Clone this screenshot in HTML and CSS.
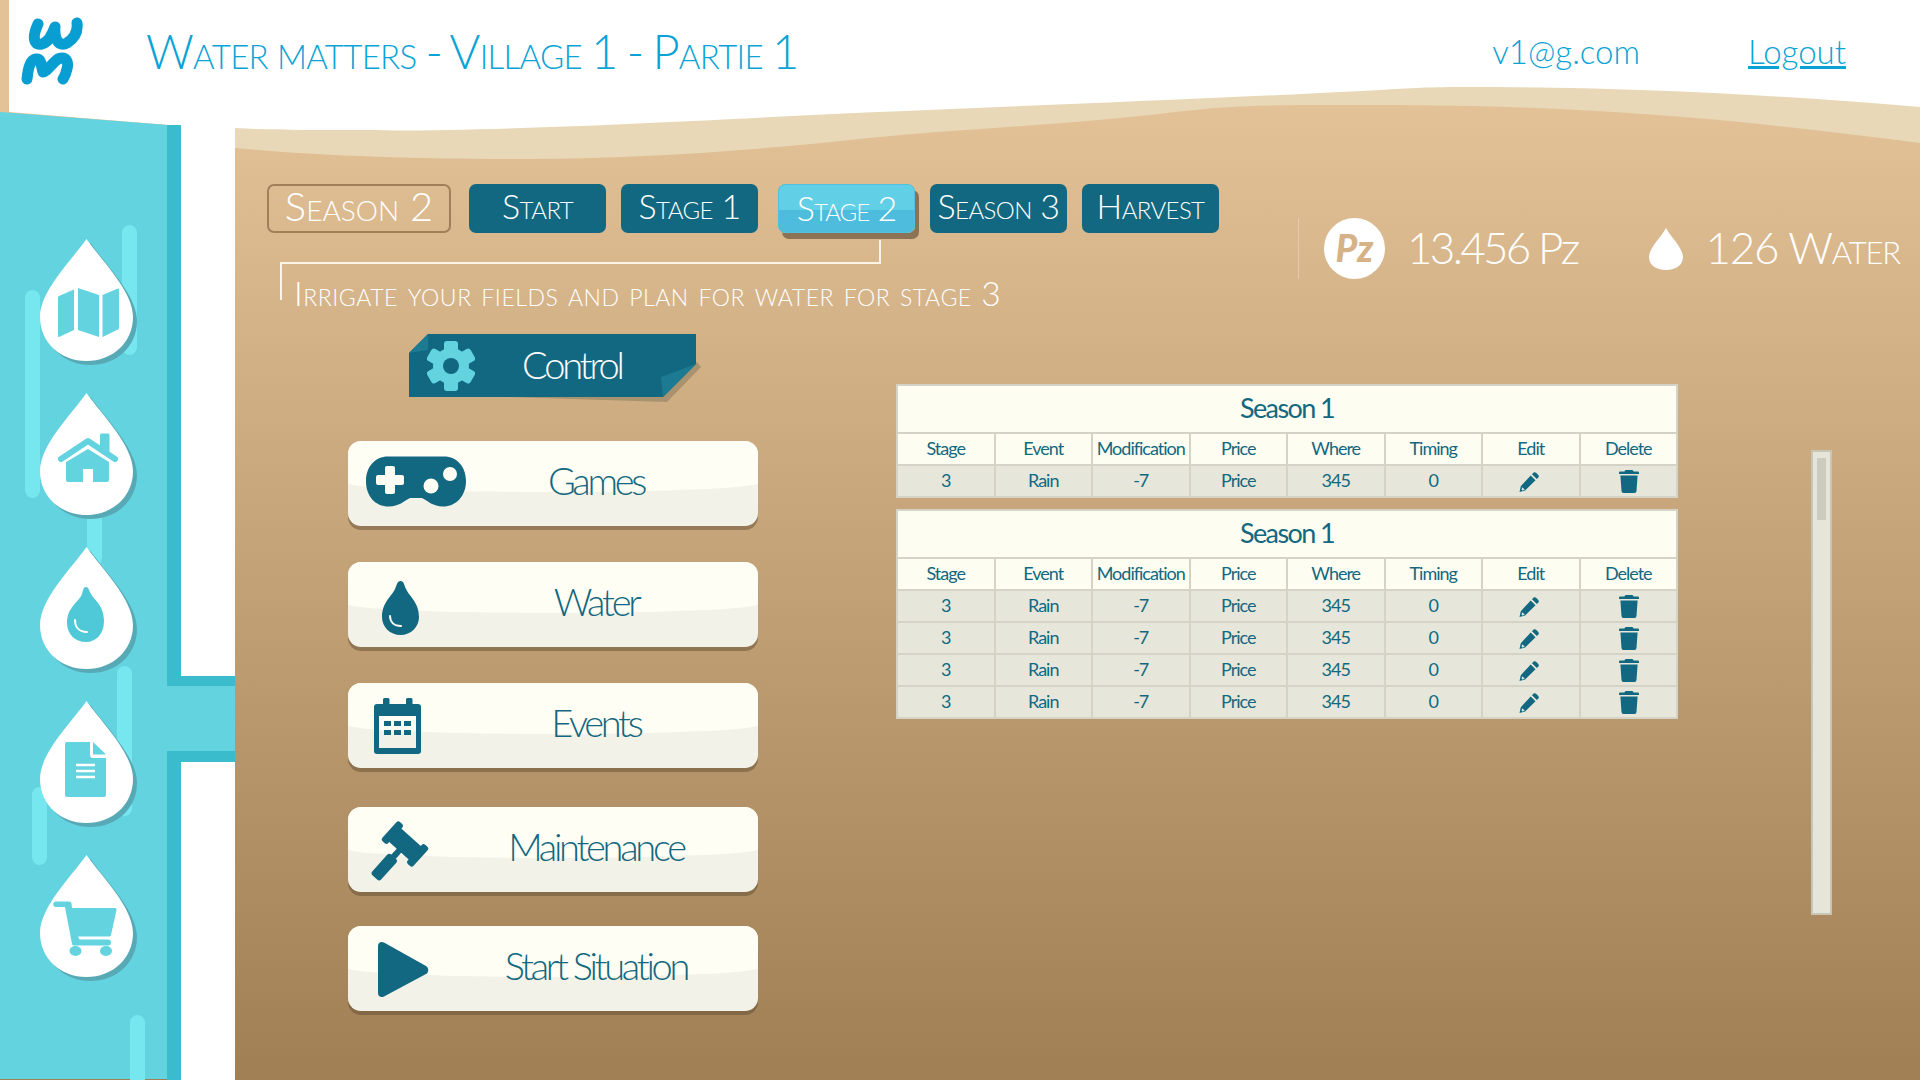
FILE: index.html
```html
<!DOCTYPE html>
<html lang="en">
<head>
    <meta charset="UTF-8">
    <title>Water Matters</title>
    <link rel="stylesheet" href="styles.css">
</head>
<body>
    <svg width="0" height="0" class="defs">
        <symbol id="ico-pencil" viewBox="0 0 20 20">
            <path d="M14.6 0.6a2 2 0 0 1 2.5 0.1l2.2 2.2a2 2 0 0 1 0.1 2.5l-1.6 1.6-4.8-4.8zM11.7 3.5l4.8 4.8-10.4 10.3-5.6 1.4 1.3-5.8zM3.3 15.2l-0.7 2.4 0.8 0.8 2.4-0.7z"/>
        </symbol>
        <symbol id="ico-trash" viewBox="0 0 20 23">
            <path d="M7 0h6a1.5 1.5 0 0 1 1.5 1.5h4.2a1.2 1.2 0 0 1 1.3 1.2v1.3h-20v-1.3a1.2 1.2 0 0 1 1.3-1.2h4.2a1.5 1.5 0 0 1 1.5-1.5zM1.4 5.5h17.2l-1.1 15.6a2 2 0 0 1-2 1.9h-11a2 2 0 0 1-2-1.9z"/>
        </symbol>
        <symbol id="ico-drop" viewBox="0 0 97 126">
            <path class="drop-shadow" transform="translate(4 4)" d="M46.5 0C62 22 93 52 93 78C93 104 72 122 46.5 122C21 122 0 104 0 78C0 52 31 22 46.5 0Z"/>
            <path class="drop-body" d="M46.5 0C62 22 93 52 93 78C93 104 72 122 46.5 122C21 122 0 104 0 78C0 52 31 22 46.5 0Z"/>
        </symbol>
    </svg>

    <div class="page">
        <!-- landscape behind everything: sand, header wave, water pipe -->
        <svg class="backdrop" viewBox="0 0 1920 1080" width="1920" height="1080">
            <path fill="#e8d8b7" d="M235 80H1920V143C1760 122 1600 105 1380 105C1290 105 1240 104 1175 112C1070 125 970 128 869 138C760 150 640 159 524 159C420 159 320 156 235 148Z"/>
            <path fill="#fff" d="M9 0H1920V107C1760 93 1600 87 1470 87C1430 87 1410 88 1380 90C1150 102 950 108 792 116C600 126 450 132 356 130C310 130 270 130 235 128L181 126L9 112Z"/>
            <rect x="181" y="126" width="54" height="954" fill="#fff"/>
            <path fill="#62d3df" d="M0 112L181 126V1079H0Z"/>
            <rect x="167" y="125" width="14" height="955" fill="#3bbccc"/>
            <rect x="167" y="676" width="68" height="86" fill="#3bbccc"/>
            <rect x="167" y="686" width="68" height="65" fill="#62d3df"/>
        </svg>

        <header class="topbar">
            <svg class="logo" viewBox="20 17 64 70" width="64" height="70">
                <path d="M38 25C31 40 35 47 42 45C49 43 52 36 55 28C54 42 60 48 67 44C75 39 78 32 77 24"/>
                <path d="M27 80C28 70 30 61 36 60C42 59 41 68 43 73C47 73 52 64 58 60C66 57 69 62 67 70C66 74 65 77 63 80"/>
            </svg>
            <h1 class="title">Water matters - Village 1 - Partie 1</h1>
            <span class="user-mail">v1@g.com</span>
            <a class="logout" href="#">Logout</a>
        </header>

        <div class="workspace">
            <aside class="sidebar">
                <i class="streak streak-a"></i>
                <i class="streak streak-b"></i>
                <i class="streak streak-c"></i>
                <i class="streak streak-d"></i>
                <i class="streak streak-e"></i>
                <i class="streak streak-f"></i>

                <a class="drop" href="#">
                    <svg viewBox="0 0 97 126" width="97" height="126">
                        <use href="#ico-drop"/>
                        <path class="drop-ico" d="M19 57L34 50.500V91L19 98a1 1 0 0 1-1-1V58.500a2 2 0 0 1 1-1.500zM38 49L59 56V98L38 91zM62.500 56L78 49.500a1 1 0 0 1 1 1V89a2 2 0 0 1-1 1.500L62.500 98z"/>
                    </svg>
                </a>
                <a class="drop" href="#">
                    <svg viewBox="0 0 97 126" width="97" height="126">
                        <use href="#ico-drop"/>
                        <path class="drop-line" d="M21 66L48 48L75 66"/>
                        <path class="drop-ico" d="M60 42a1.500 1.500 0 0 1 1.500-1.500H68a1.500 1.500 0 0 1 1.500 1.500V59L60 53zM48 56L69 69V87a2 2 0 0 1-2 2H53V76H43V89H28a2 2 0 0 1-2-2V69z"/>
                    </svg>
                </a>
                <a class="drop" href="#">
                    <svg viewBox="0 0 97 126" width="97" height="126">
                        <use href="#ico-drop"/>
                        <path class="drop-ico-dark" d="M46 40C49 40 49 44 51 47C54 53 64 58 64 74C64 87 56 95 46 95C35 95 27 87 27 76C27 60 39 55 42 47C43 44 43 40 46 40Z"/>
                        <path class="drop-gleam" d="M35 73C35 80 39 85 47 85"/>
                    </svg>
                </a>
                <a class="drop" href="#">
                    <svg viewBox="0 0 97 126" width="97" height="126">
                        <use href="#ico-drop"/>
                        <path class="drop-ico" d="M26.500 41H50V54a3 3 0 0 0 3 3H66V94a2 2 0 0 1-2 2H27a2 2 0 0 1-2-2V43a2 2 0 0 1 1.500-2zM53 41L66 53.500H53z"/>
                        <path class="drop-rule" d="M36 64H55M36 70H55M36 76H55"/>
                    </svg>
                </a>
                <a class="drop" href="#">
                    <svg viewBox="0 0 97 126" width="97" height="126">
                        <use href="#ico-drop"/>
                        <path class="drop-ico" d="M16 46.500H29a2.500 2.500 0 0 1 2.500 2L32 53H75a1.500 1.500 0 0 1 1.500 2L71 80a2 2 0 0 1-2 1.500H38L39.500 84.500H68a2.500 2.500 0 0 1 0 6H34a2 2 0 0 1-2-1.500L25 52H16a2.700 2.700 0 0 1 0-5.500z"/>
                        <ellipse class="drop-ico" cx="35.500" cy="96" rx="6" ry="5"/>
                        <ellipse class="drop-ico" cx="66" cy="96" rx="6" ry="5"/>
                    </svg>
                </a>
            </aside>

            <main class="stage">
                <div class="stage-top">
                    <nav class="tabs">
                        <span class="tab tab-season">Season 2</span>
                        <a class="tab" href="#">Start</a>
                        <a class="tab" href="#">Stage 1</a>
                        <a class="tab tab-active" href="#">Stage 2</a>
                        <a class="tab" href="#">Season 3</a>
                        <a class="tab" href="#">Harvest</a>
                    </nav>
                    <div class="stats">
                        <span class="coin">Pz</span>
                        <span class="stat">13.456 Pz</span>
                        <svg class="stat-drop" viewBox="0 0 34 42" width="34" height="42">
                            <path d="M17 0C21 8 34 20 34 29C34 37 27 42 17 42C7 42 0 37 0 29C0 20 13 8 17 0Z"/>
                        </svg>
                        <span class="stat stat-water">126 Water</span>
                    </div>
                </div>

                <p class="hint">Irrigate your fields and plan for water for stage 3</p>

                <div class="board">
                    <div class="menu">
                        <div class="ribbon">
                            <svg class="ribbon-bg" viewBox="0 0 300 72" width="300" height="72">
                                <path fill="#a8926f" d="M4 60L258 68L292 33L288 28L250 60Z"/>
                                <path fill="#126880" d="M0 19L19 0H287V30L254 63L0 63Z"/>
                                <path fill="#1c7a92" d="M0 19L19 0V16Z"/>
                                <path fill="#1c7a92" d="M252 43L287 30L254 63Z"/>
                            </svg>
                            <svg class="ribbon-gear" viewBox="0 0 48 50" width="48" height="50">
                                <g transform="translate(24 25)">
                                    <rect x="-7" y="-25" width="14" height="50" rx="3"/>
                                    <rect x="-7" y="-25" width="14" height="50" rx="3" transform="rotate(60)"/>
                                    <rect x="-7" y="-25" width="14" height="50" rx="3" transform="rotate(120)"/>
                                    <circle r="18"/>
                                    <circle class="gear-hole" r="8"/>
                                </g>
                            </svg>
                            <span class="ribbon-label">Control</span>
                        </div>

                        <a class="menu-item" href="#">
                            <svg viewBox="0 0 110 65" width="110" height="65">
                                <path d="M30 5.500H86C99 5.500 108 16 108 30C108 45 98 55.500 85 55.500C75 55.500 70 50 64 47H52C46 50 41 55.500 31 55.500C17 55.500 8 45 8 30C8 16 17 5.500 30 5.500Z"/>
                                <path class="pad-hole" d="M27 17a2 2 0 0 1 2-2H35a2 2 0 0 1 2 2V24H44a2 2 0 0 1 2 2V32a2 2 0 0 1-2 2H37V41a2 2 0 0 1-2 2H29a2 2 0 0 1-2-2V34H20a2 2 0 0 1-2-2V26a2 2 0 0 1 2-2H27z"/>
                                <circle class="pad-hole" cx="92" cy="23" r="7"/>
                                <circle class="pad-hole" cx="73" cy="35" r="7.500"/>
                            </svg>
                            <span class="menu-label">Games</span>
                        </a>
                        <a class="menu-item" href="#">
                            <svg viewBox="0 0 110 65" width="110" height="65">
                                <path d="M42.500 9C46 9 46 13 48 17C51 24 61 30 61 45C61 55 53 63 42.500 63C32 63 24 55 24 45C24 30 34 24 37 17C39 13 39 9 42.500 9Z"/>
                                <path class="gleam" d="M32 44C32 50 36 54 43 54"/>
                            </svg>
                            <span class="menu-label">Water</span>
                        </a>
                        <a class="menu-item" href="#">
                            <svg viewBox="0 0 110 65" width="110" height="65">
                                <path d="M25 6.500a1.500 1.500 0 0 1 1.500-1.500H30a1.500 1.500 0 0 1 1.500 1.500V11H48V6.500a1.500 1.500 0 0 1 1.500-1.500H53a1.500 1.500 0 0 1 1.500 1.500V11H60a3 3 0 0 1 3 3V58a3 3 0 0 1-3 3H19a3 3 0 0 1-3-3V14a3 3 0 0 1 3-3H25zM21 23V55H58V23z"/>
                                <path d="M26 28h7v5h-7zM36 28h7v5h-7zM46 28h7v5h-7zM26 37h7v5h-7zM36 37h7v5h-7zM46 37h7v5h-7z"/>
                            </svg>
                            <span class="menu-label">Events</span>
                        </a>
                        <a class="menu-item" href="#">
                            <svg viewBox="0 0 110 65" width="110" height="65">
                                <g transform="translate(47 27) rotate(42)">
                                    <rect x="-15" y="-9" width="30" height="18"/>
                                    <rect x="-21" y="-13" width="8" height="26" rx="2.500"/>
                                    <rect x="13" y="-13" width="8" height="26" rx="2.500"/>
                                    <rect x="-3" y="8" width="6" height="10"/>
                                    <rect x="-6" y="17" width="12" height="28" rx="3"/>
                                </g>
                            </svg>
                            <span class="menu-label">Maintenance</span>
                        </a>
                        <a class="menu-item" href="#">
                            <svg viewBox="0 0 110 65" width="110" height="65">
                                <path d="M20 10C20 6.500 23 5 26 6.500L68 30C71 32 71 36 68 38L26 60.500C23 62 20 60.500 20 57Z"/>
                            </svg>
                            <span class="menu-label">Start Situation</span>
                        </a>
                    </div>

                    <div class="tables">
                        <table class="season">
                            <tr><th colspan="8" class="season-title">Season 1</th></tr>
                            <tr><th>Stage</th><th>Event</th><th>Modification</th><th>Price</th><th>Where</th><th>Timing</th><th>Edit</th><th>Delete</th></tr>
                            <tr><td>3</td><td>Rain</td><td>-7</td><td>Price</td><td>345</td><td>0</td>
                                <td><svg class="ico-edit"><use href="#ico-pencil"/></svg></td>
                                <td><svg class="ico-del"><use href="#ico-trash"/></svg></td></tr>
                        </table>
                        <table class="season">
                            <tr><th colspan="8" class="season-title">Season 1</th></tr>
                            <tr><th>Stage</th><th>Event</th><th>Modification</th><th>Price</th><th>Where</th><th>Timing</th><th>Edit</th><th>Delete</th></tr>
                            <tr><td>3</td><td>Rain</td><td>-7</td><td>Price</td><td>345</td><td>0</td>
                                <td><svg class="ico-edit"><use href="#ico-pencil"/></svg></td>
                                <td><svg class="ico-del"><use href="#ico-trash"/></svg></td></tr>
                            <tr><td>3</td><td>Rain</td><td>-7</td><td>Price</td><td>345</td><td>0</td>
                                <td><svg class="ico-edit"><use href="#ico-pencil"/></svg></td>
                                <td><svg class="ico-del"><use href="#ico-trash"/></svg></td></tr>
                            <tr><td>3</td><td>Rain</td><td>-7</td><td>Price</td><td>345</td><td>0</td>
                                <td><svg class="ico-edit"><use href="#ico-pencil"/></svg></td>
                                <td><svg class="ico-del"><use href="#ico-trash"/></svg></td></tr>
                            <tr><td>3</td><td>Rain</td><td>-7</td><td>Price</td><td>345</td><td>0</td>
                                <td><svg class="ico-edit"><use href="#ico-pencil"/></svg></td>
                                <td><svg class="ico-del"><use href="#ico-trash"/></svg></td></tr>
                        </table>
                    </div>

                    <div class="scrollbar"><div class="scrollbar-thumb"></div></div>
                </div>
            </main>
        </div>
    </div>
</body>
</html>
```

FILE: styles.css
```css
body {
    margin: 0;
    font-family: "Lato", "Liberation Sans", sans-serif;
}

.defs {
    position: absolute;
}

.page {
    position: relative;
    width: 1920px;
    height: 1080px;
    overflow: hidden;
    background: linear-gradient(180deg, #e3c297 100px, #a07f55 100%);
}

.backdrop {
    position: absolute;
    top: 0;
    left: 0;
}

/* Header */
.topbar {
    position: relative;
    display: flex;
    align-items: center;
    box-sizing: border-box;
    height: 106px;
    padding: 0 0 4px 20px;
    color: #0ba3d6;
}

.logo {
    flex: none;
    margin-right: 62px;
}

.logo path {
    fill: none;
    stroke: #089ed2;
    stroke-width: 11;
    stroke-linecap: round;
    stroke-linejoin: round;
}

.title {
    margin: 0;
    font-size: 47px;
    font-weight: 300;
    font-variant: small-caps;
    letter-spacing: -0.7px;
    word-spacing: -3px;
    white-space: nowrap;
}

.user-mail {
    margin-left: auto;
    font-size: 33px;
    font-weight: 300;
}

.logout {
    margin: 0 74px 0 108px;
    font-size: 33px;
    font-weight: 300;
    color: #0ba3d6;
}

/* Layout under the header */
.workspace {
    position: relative;
    display: flex;
    height: 974px;
}

.sidebar {
    position: relative;
    flex: none;
    display: flex;
    flex-direction: column;
    gap: 28px;
    width: 235px;
    padding: 133px 0 0 40px;
    box-sizing: border-box;
}

.streak {
    position: absolute;
    width: 15px;
    background: #76e6ef;
    border-radius: 8px;
}

.streak-a { left: 122px; top: 119px; height: 130px; }
.streak-b { left: 25px; top: 184px; height: 208px; }
.streak-c { left: 87px; top: 400px; height: 60px; }
.streak-d { left: 117px; top: 560px; height: 150px; }
.streak-e { left: 32px; top: 681px; height: 78px; }
.streak-f { left: 130px; top: 909px; height: 80px; }

.drop {
    position: relative;
    display: block;
    width: 97px;
    height: 126px;
}

.drop svg {
    display: block;
}

.drop-shadow { fill: #57aab5; }
.drop-body { fill: #fff; }
.drop-ico { fill: #62d3df; }
.drop-ico-dark { fill: #4fc8d8; }

.drop-line {
    fill: none;
    stroke: #62d3df;
    stroke-width: 6;
    stroke-linecap: round;
    stroke-linejoin: round;
}

.drop-gleam {
    fill: none;
    stroke: #fff;
    stroke-width: 2;
    stroke-linecap: round;
}

.drop-rule {
    fill: none;
    stroke: #fff;
    stroke-width: 2.500;
}

.stage {
    flex: 1;
    min-width: 0;
    padding-top: 78px;
}

.stage-top {
    display: flex;
    align-items: flex-start;
    height: 78px;
    padding-left: 32px;
}

/* Stage tabs */
.tabs {
    display: flex;
    gap: 15px;
}

.tab {
    display: flex;
    align-items: center;
    justify-content: center;
    box-sizing: border-box;
    width: 137px;
    height: 49px;
    padding-bottom: 6px;
    border-radius: 7px;
    background: #126880;
    color: #fff;
    font-size: 34px;
    font-weight: 300;
    font-variant: small-caps;
    letter-spacing: -0.6px;
    text-decoration: none;
    white-space: nowrap;
}

.tab-season {
    width: 184px;
    margin-right: 3px;
    background: none;
    border: 2px solid #a08059;
    font-size: 40px;
    letter-spacing: 0;
}

.tab-active {
    margin-left: 5px;
    padding-bottom: 2px;
    background: linear-gradient(180deg, #61d0e6 54%, #4dbcdd 54%);
    box-shadow: 4px 6px 0 #8c7356;
    border: 1px solid #4fc1de;
    letter-spacing: -1px;
}

/* Money and water counters */
.stats {
    display: flex;
    align-items: center;
    flex: none;
    height: 61px;
    margin: 34px 0 0 79px;
    padding-left: 25px;
    border-left: 1px solid #e6cba8;
    color: #fff;
}

.coin {
    flex: none;
    width: 61px;
    height: 61px;
    margin-right: 22px;
    border-radius: 50%;
    background: #fff;
    color: #d5b288;
    font-size: 37px;
    font-weight: 900;
    font-style: italic;
    line-height: 60px;
    text-align: center;
}

.stat {
    padding-bottom: 4px;
    font-size: 44px;
    font-weight: 300;
    letter-spacing: -2.7px;
    white-space: nowrap;
}

.stat-drop {
    flex: none;
    margin: 0 22px 0 72px;
    fill: #fff;
}

.stat-water {
    font-variant: small-caps;
    letter-spacing: -1.2px;
}

/* Hint with its bracket up to the active tab */
.hint {
    position: relative;
    box-sizing: border-box;
    width: 601px;
    height: 71px;
    margin: 0 0 0 45px;
    padding: 9px 0 0 14px;
    border-top: 2px solid #fbf4e6;
    color: #fff;
    font-size: 33.500px;
    font-weight: 300;
    font-variant: small-caps;
    letter-spacing: 0.55px;
    white-space: nowrap;
}

.hint::before {
    content: "";
    position: absolute;
    left: 0;
    top: 0;
    width: 2px;
    height: 36px;
    background: #fbf4e6;
}

.hint::after {
    content: "";
    position: absolute;
    right: 0;
    top: -24px;
    width: 2px;
    height: 24px;
    background: #fbf4e6;
}

/* Main area */
.board {
    display: flex;
    align-items: flex-start;
}

.menu {
    flex: none;
    width: 410px;
    margin-left: 113px;
}

.ribbon {
    position: relative;
    display: flex;
    align-items: center;
    width: 287px;
    height: 63px;
    margin: 1px 0 44px 61px;
}

.ribbon-bg {
    position: absolute;
    top: 0;
    left: 0;
}

.ribbon-gear {
    position: relative;
    margin-left: 18px;
    fill: #62d3df;
}

.gear-hole {
    fill: #126880;
}

.ribbon-label {
    position: relative;
    margin: 0 0 3px 47px;
    color: #fff;
    font-size: 38px;
    font-weight: 300;
    letter-spacing: -3.200px;
}

.menu-item {
    position: relative;
    display: flex;
    align-items: center;
    height: 85px;
    margin-bottom: 36px;
    padding-left: 10px;
    border-radius: 13px;
    background: #f2f2e8;
    box-shadow: 0 4px 0 rgba(90, 70, 45, 0.45);
    color: #126880;
    text-decoration: none;
}

/* lighter upper half of the button */
.menu-item::before {
    content: "";
    position: absolute;
    top: 0;
    left: 0;
    right: 0;
    height: 51px;
    border-radius: 13px 13px 50% 50% / 13px 13px 9px 9px;
    background: #fefef4;
}

.menu-item svg {
    position: relative;
    flex: none;
    fill: #126880;
}

.pad-hole {
    fill: #fefef4;
}

.gleam {
    fill: none;
    stroke: #fefef4;
    stroke-width: 2;
    stroke-linecap: round;
}

.menu-label {
    position: relative;
    flex: 1;
    padding: 0 34px 8px 0;
    font-size: 38px;
    font-weight: 300;
    letter-spacing: -3.300px;
    text-align: center;
    white-space: nowrap;
}

.menu-item:nth-of-type(4) {
    margin: 39px 0 34px;
}

/* Season tables */
.tables {
    flex: none;
    display: flex;
    flex-direction: column;
    gap: 11px;
    width: 782px;
    margin: 51px 0 0 138px;
}

.season {
    width: 100%;
    table-layout: fixed;
    border-collapse: collapse;
    border: 2px solid #d4d3c6;
    color: #126880;
    font-size: 18px;
    letter-spacing: -1px;
    text-align: center;
}

.season th,
.season td {
    box-sizing: border-box;
    height: 32px;
    padding: 0 0 2px;
    border: 2px solid #d4d3c6;
    font-weight: 400;
}

.season th {
    background: #fdfdf2;
}

.season td {
    background: #e6e6db;
}

.season .season-title {
    height: 48px;
    padding-bottom: 4px;
    font-size: 27px;
    letter-spacing: -1.600px;
}

.season svg {
    display: block;
    margin: 3px auto 0;
    fill: #126880;
}

.ico-edit {
    width: 20px;
    height: 20px;
    position: relative;
    left: -2px;
}

.ico-del {
    width: 20px;
    height: 23px;
    position: relative;
    left: 1px;
}

.scrollbar {
    flex: none;
    box-sizing: border-box;
    width: 21px;
    height: 465px;
    margin: 117px 0 0 133px;
    padding: 6px 4px;
    background: #e5e5da;
    border: 2px solid #c6c5b6;
}

.scrollbar-thumb {
    width: 9px;
    height: 62px;
    background: #cbcbbf;
}
```
